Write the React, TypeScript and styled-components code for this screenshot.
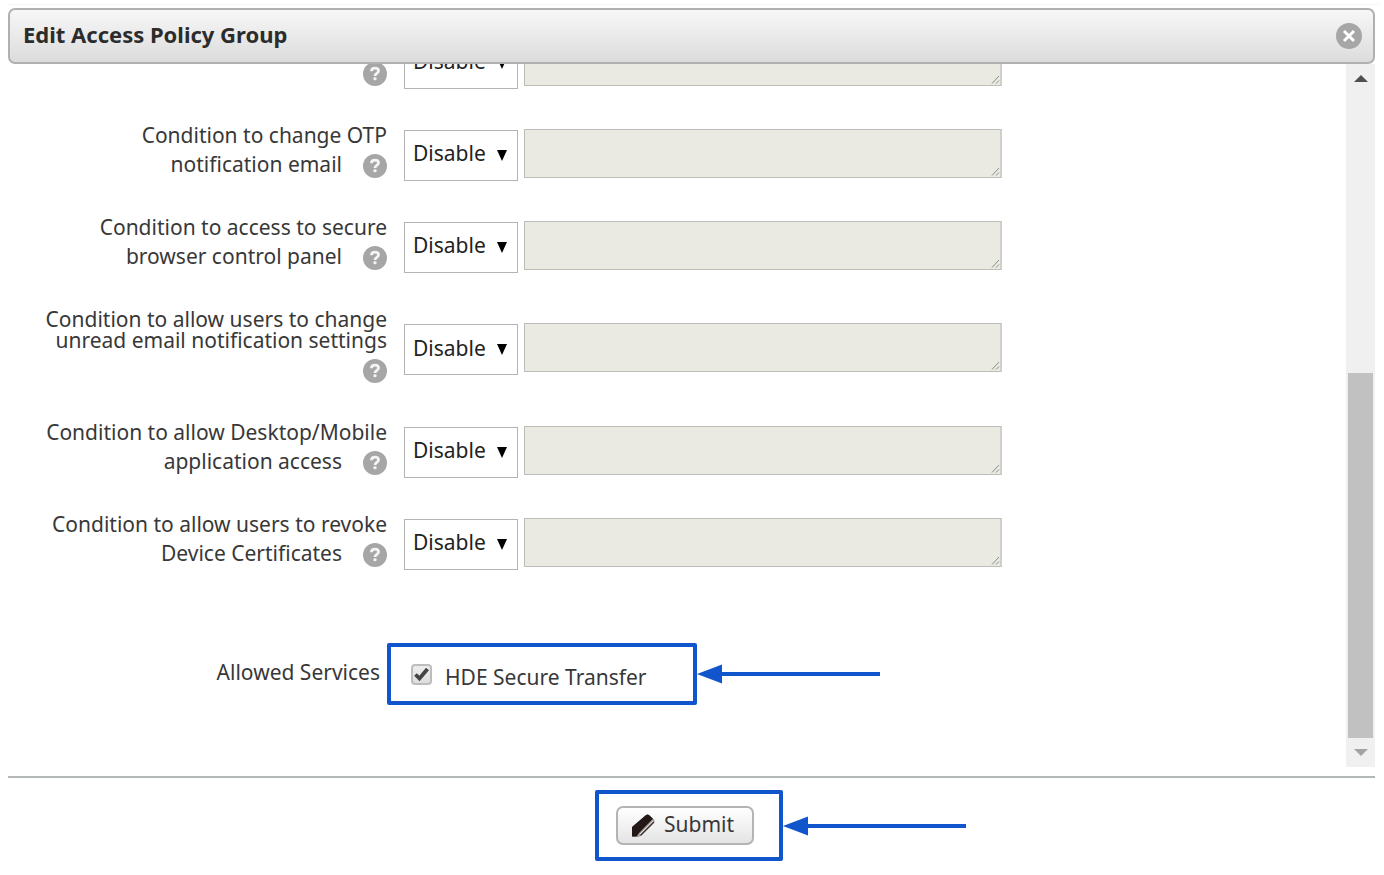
import React from "react";
import styled, { createGlobalStyle } from "styled-components";

const GlobalStyle = createGlobalStyle`
  *, *::before, *::after { box-sizing: border-box; }
  body {
    margin: 0;
    background: #fff;
    color: #383838;
    font-family: "Noto Sans", "Open Sans", sans-serif;
    font-size: 21px;
    line-height: 21px;
  }
  button, select, textarea, input { font: inherit; color: inherit; margin: 0; }
`;

const Frame = styled.div`
  height: 100vh;
  padding: 4px 5px 0 7px;
`;

const Dialog = styled.section`
  display: flex;
  flex-direction: column;
  height: 100%;
  padding: 3px 4px 0 1px;
  border-top: 1px solid #f4f4f4;
`;

const Header = styled.header`
  display: flex;
  flex: none;
  justify-content: space-between;
  align-items: center;
  height: 56px;
  padding: 0 11px 0 13px;
  border: 2px solid #b0b0b0;
  border-radius: 7px;
  background: linear-gradient(#f7f7f7, #dcdcdc);
`;

const Title = styled.h1`
  margin: 0;
  padding-bottom: 4px;
  color: #2c2c2c;
  font-size: 22px;
  line-height: 28px;
  font-weight: 700;
`;

const CloseButton = styled.button`
  display: flex;
  padding: 0;
  border: 0;
  background: none;
`;

const Body = styled.div`
  display: flex;
  flex: 1;
  min-height: 0;
`;

const Form = styled.form`
  display: flex;
  flex: 1;
  flex-direction: column;
  justify-content: flex-end;
  overflow: hidden;
`;

const Row = styled.div`
  display: flex;
  flex: none;
  align-items: center;
  padding: 16px 0;
`;

const LabelCell = styled.div`
  display: flex;
  flex: none;
  flex-direction: column;
  justify-content: flex-end;
  width: 379px;
  min-height: 60px;
  margin-right: 17px;
  text-align: right;
`;

const LabelLine = styled.label`
  display: block;
  white-space: nowrap;
`;

const HelpLine = styled.div`
  display: flex;
  justify-content: flex-end;
  align-items: center;
  gap: 21px;
  height: 39px;
`;

const HelpText = styled(LabelLine)`
  padding-bottom: 2px;
`;

const HelpButton = styled.button`
  display: flex;
  padding: 0;
  border: 0;
  background: none;
`;

const SelectBox = styled.div`
  position: relative;
  flex: none;
  width: 114px;
  height: 51px;
  margin-right: 6px;
`;

const Select = styled.select`
  appearance: none;
  width: 100%;
  height: 100%;
  padding: 0 8px 3px;
  border: 1px solid #b4b4b4;
  border-radius: 0;
  background: #fff;
  color: #222;
`;

const SelectArrow = styled.svg`
  position: absolute;
  top: 20px;
  right: 11px;
  pointer-events: none;
`;

const TextBox = styled.div`
  position: relative;
  flex: 0 1 478px;
  height: 49px;
  margin-bottom: 4px;
`;

const TextArea = styled.textarea`
  display: block;
  width: 100%;
  height: 100%;
  padding: 4px;
  border: 1px solid #bcbcb8;
  border-right: 2px solid #d0d0cb;
  background: #eaeae2;
  resize: none;
`;

const Grip = styled.svg`
  position: absolute;
  right: 2px;
  bottom: 2px;
  pointer-events: none;
`;

const ServicesRow = styled.div`
  display: flex;
  flex: none;
  align-items: center;
  padding: 53px 0 62px;
`;

const ServicesLabel = styled.div`
  width: 372px;
  margin-right: 7px;
  padding-bottom: 3px;
  text-align: right;
`;

const Highlight = styled.div<{ $submit?: boolean }>`
  display: flex;
  align-items: center;
  width: ${(p) => (p.$submit ? 188 : 310)}px;
  height: ${(p) => (p.$submit ? 71 : 62)}px;
  padding-left: ${(p) => (p.$submit ? 17 : 20)}px;
  border: 4px solid #1155cc;
  border-radius: 2px;
`;

const CheckLabel = styled.label`
  display: flex;
  align-items: center;
  gap: 13px;
`;

const CheckText = styled.span`
  padding-top: 7px;
`;

const CheckWrap = styled.span`
  position: relative;
  width: 21px;
  height: 21px;
`;

const Checkbox = styled.input`
  appearance: none;
  display: block;
  width: 21px;
  height: 21px;
  border: 2px solid #bdbdbd;
  border-radius: 4px;
  background: linear-gradient(#ededed, #dedede);
  &:not(:checked) + svg { display: none; }
`;

const CheckMark = styled.svg`
  position: absolute;
  top: 2px;
  left: 2px;
  pointer-events: none;
`;

const Scrollbar = styled.div`
  display: flex;
  flex: none;
  flex-direction: column;
  align-items: center;
  width: 29px;
  background: #f0f0f0;
`;

const ScrollArrow = styled.svg`
  flex: none;
  margin: 11px 0;
`;

const ScrollTrack = styled.div`
  display: grid;
  grid-template-rows: 280fr 365fr;
  flex: 1;
  width: 25px;
`;

const ScrollThumb = styled.div`
  grid-row: 2;
  background: #c1c1c1;
`;

const Footer = styled.footer`
  display: grid;
  grid-template-columns: 1fr auto 1fr;
  align-items: center;
  flex: none;
  height: 99px;
  margin-top: 9px;
  padding: 12px 5px 14px 0;
  border-top: 2px solid #b4b8b4;
`;

const SubmitCell = styled.div`
  grid-column: 2;
`;

const SubmitButton = styled.button`
  display: flex;
  align-items: center;
  gap: 9px;
  width: 138px;
  height: 39px;
  padding: 0 12px 0 13px;
  border: 2px solid #b4b4b4;
  border-radius: 7px;
  background: linear-gradient(#fff, #e4e4e4);
`;

const SubmitText = styled.span`
  padding-bottom: 2px;
`;

function Arrow() {
  return (
    <svg width="184" height="20" viewBox="0 0 184 20" aria-hidden="true">
      <path d="M0 10 25 .5v19z" fill="#1155cc" />
      <path d="M24 10H183" stroke="#1155cc" strokeWidth="4" />
    </svg>
  );
}

function Help() {
  return (
    <HelpButton type="button" aria-label="Help">
      <svg width="24" height="24" viewBox="0 0 24 24">
        <circle cx="12" cy="12" r="12" fill="#a6a6a6" />
        <path
          d="M8.4 9.2C8.5 7 9.9 6.2 12 6.2c2.300 0 3.500 1 3.500 2.700 0 2.400-3.500 2.500-3.500 5.100"
          fill="none"
          stroke="#f4f4f4"
          strokeWidth="2.800"
        />
        <rect x="10.500" y="15.300" width="3" height="3" rx="1" fill="#f4f4f4" />
      </svg>
    </HelpButton>
  );
}

type Condition = { id: string; lines: string[]; helpText?: string };

const conditions: Condition[] = [
  { id: "previous", lines: [] },
  { id: "otp", lines: ["Condition to change OTP"], helpText: "notification email" },
  { id: "browser", lines: ["Condition to access to secure"], helpText: "browser control panel" },
  { id: "unread", lines: ["Condition to allow users to change", "unread email notification settings"] },
  { id: "apps", lines: ["Condition to allow Desktop/Mobile"], helpText: "application access" },
  { id: "certs", lines: ["Condition to allow users to revoke"], helpText: "Device Certificates" },
];

function ConditionRow({ id, lines, helpText }: Condition) {
  return (
    <Row>
      <LabelCell>
        {lines.map((line) => (
          <LabelLine key={line} htmlFor={id}>{line}</LabelLine>
        ))}
        <HelpLine>
          {helpText && <HelpText htmlFor={id}>{helpText}</HelpText>}
          <Help />
        </HelpLine>
      </LabelCell>
      <SelectBox>
        <Select id={id} defaultValue="Disable">
          <option>Disable</option>
        </Select>
        <SelectArrow width="10" height="11" viewBox="0 0 10 11">
          <path d="M0 0H10L5 11z" fill="#000" />
        </SelectArrow>
      </SelectBox>
      <TextBox>
        <TextArea disabled aria-labelledby={id} />
        <Grip width="9" height="9" viewBox="0 0 9 9">
          <path d="M1 8.500 8 1M5 8.500 8 5.500" fill="none" stroke="#8c8c88" />
        </Grip>
      </TextBox>
    </Row>
  );
}

export default function App() {
  return (
    <>
      <GlobalStyle />
      <Frame>
        <Dialog role="dialog" aria-labelledby="title">
          <Header>
            <Title id="title">Edit Access Policy Group</Title>
            <CloseButton type="button" aria-label="Close">
              <svg width="26" height="26" viewBox="0 0 26 26">
                <circle cx="13" cy="13" r="13" fill="#a6a6a6" />
                <path d="M8 8 18 18M18 8 8 18" stroke="#fff" strokeWidth="3" />
              </svg>
            </CloseButton>
          </Header>
          <Body>
            <Form id="policy">
              {conditions.map((c) => (
                <ConditionRow key={c.id} {...c} />
              ))}
              <ServicesRow>
                <ServicesLabel>Allowed Services</ServicesLabel>
                <Highlight>
                  <CheckLabel>
                    <CheckWrap>
                      <Checkbox type="checkbox" defaultChecked />
                      <CheckMark width="17" height="17" viewBox="0 0 17 17">
                        <path d="M2.500 8.500 6.500 12.500 14.500 3" fill="none" stroke="#444" strokeWidth="3.800" />
                      </CheckMark>
                    </CheckWrap>
                    <CheckText>HDE Secure Transfer</CheckText>
                  </CheckLabel>
                </Highlight>
                <Arrow />
              </ServicesRow>
            </Form>
            <Scrollbar aria-hidden="true">
              <ScrollArrow width="14" height="7" viewBox="0 0 14 7">
                <path d="M7 0 14 7H0z" fill="#505050" />
              </ScrollArrow>
              <ScrollTrack>
                <ScrollThumb />
              </ScrollTrack>
              <ScrollArrow width="14" height="7" viewBox="0 0 14 7">
                <path d="M0 0H14L7 7z" fill="#a3a3a3" />
              </ScrollArrow>
            </Scrollbar>
          </Body>
          <Footer>
            <SubmitCell>
              <Highlight $submit>
                <SubmitButton type="submit" form="policy">
                  <svg width="24" height="24" viewBox="0 0 24 24" aria-hidden="true">
                    <path d="M1 13 15 1Q16.500 0 18 1L23 5.500Q24 7 23 8.500L10 21.500 7.500 23H1z" fill="#a39c99" />
                    <path d="M1 13 15 1Q16.500 0 18 1L22 4.800 8 19 5.500 22.500H1z" fill="#231815" />
                    <path d="M8.800 20.200 22 6.800" stroke="#e6e2e0" strokeWidth="1" />
                    <path d="M9.500 21.500 23 8" stroke="#3a302d" strokeWidth="1.200" />
                  </svg>
                  <SubmitText>Submit</SubmitText>
                </SubmitButton>
              </Highlight>
            </SubmitCell>
            <Arrow />
          </Footer>
        </Dialog>
      </Frame>
    </>
  );
}
